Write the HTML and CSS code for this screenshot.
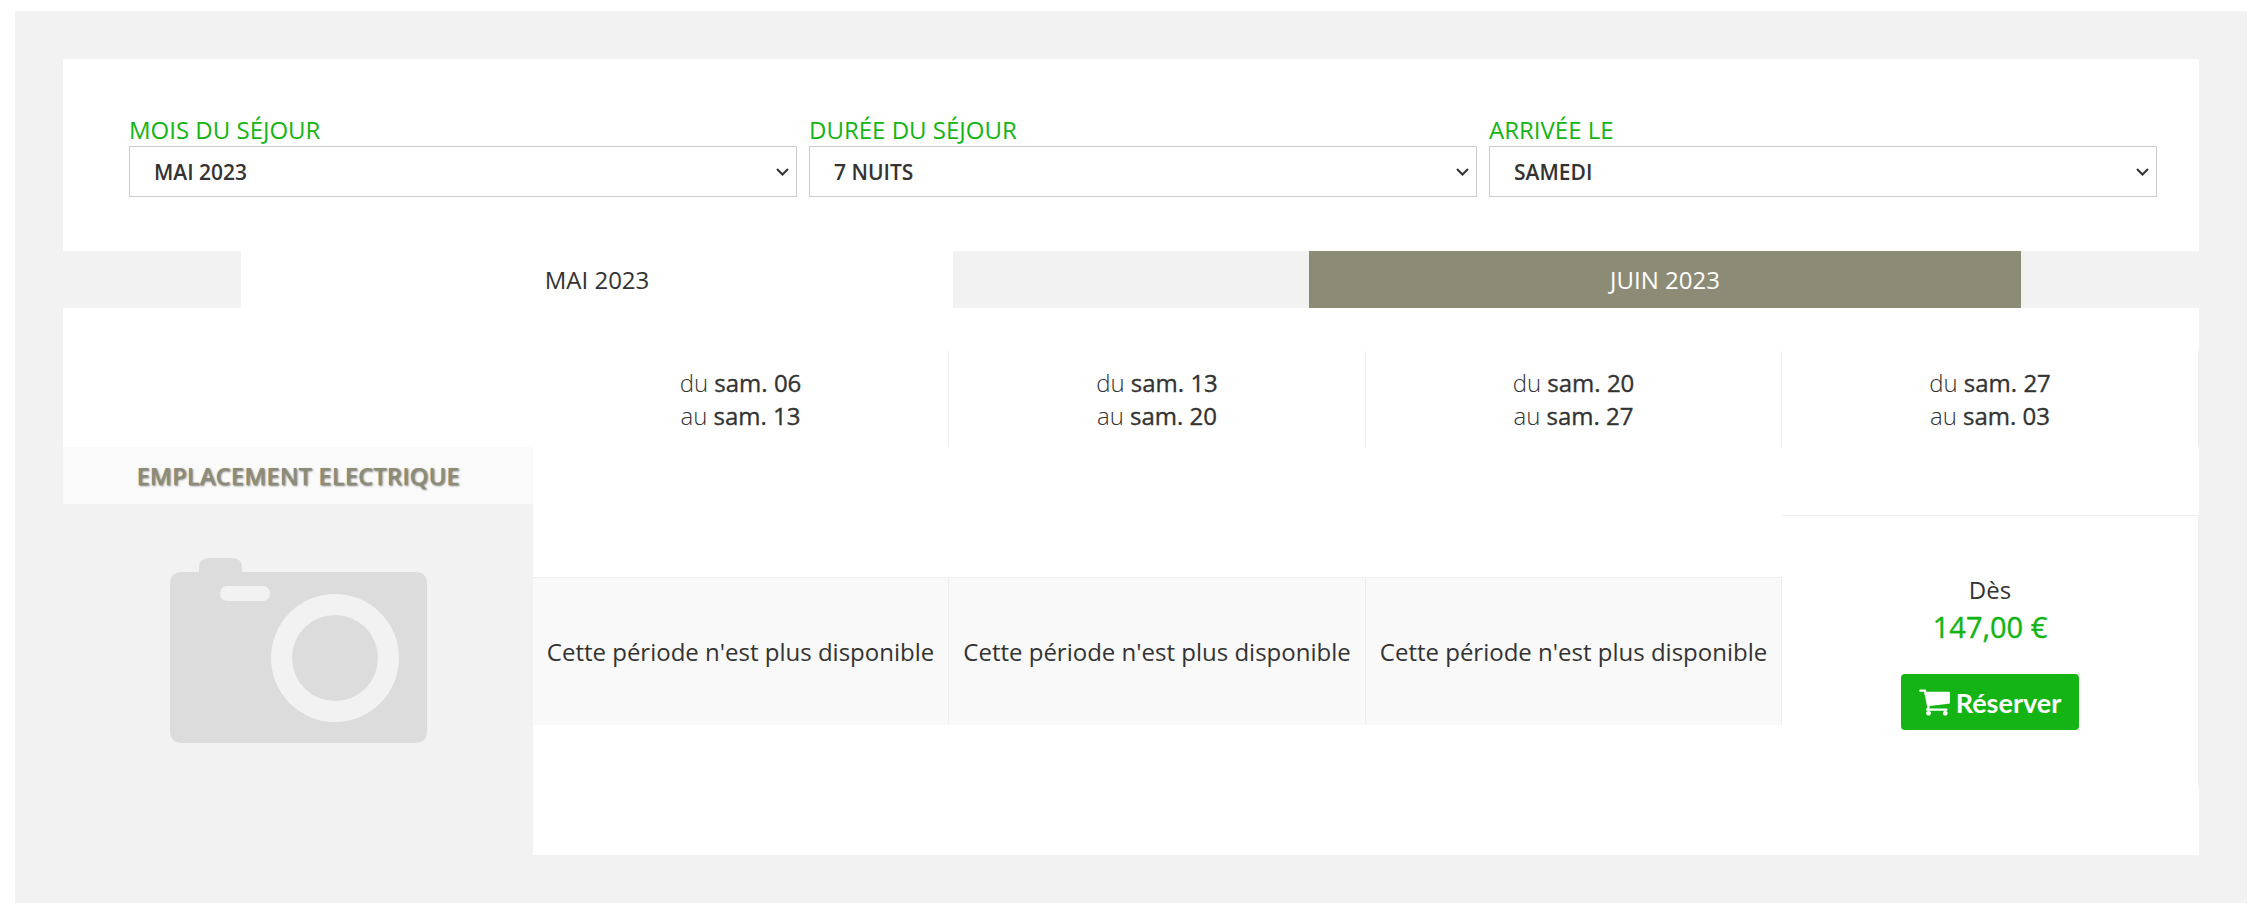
FILE: index.html
```html
<!DOCTYPE html>
<html lang="fr">
<head>
    <meta charset="UTF-8">
    <meta name="viewport" content="width=device-width, initial-scale=1.0">
    <title>Réservation</title>
    <link rel="stylesheet" href="styles.css">
</head>
<body>
    <div class="frame">
        <div class="panel">
            <form class="filters">
                <div class="field">
                    <label for="mois">MOIS DU SÉJOUR</label>
                    <select id="mois"><option>MAI 2023</option><option>JUIN 2023</option></select>
                </div>
                <div class="field">
                    <label for="duree">DURÉE DU SÉJOUR</label>
                    <select id="duree"><option>7 NUITS</option><option>14 NUITS</option></select>
                </div>
                <div class="field">
                    <label for="arrivee">ARRIVÉE LE</label>
                    <select id="arrivee"><option>SAMEDI</option><option>DIMANCHE</option></select>
                </div>
            </form>

            <div class="tabs">
                <div class="tab-gap"></div>
                <div class="tab active">MAI 2023</div>
                <div class="tab-gap"></div>
                <div class="tab">JUIN 2023</div>
                <div class="tab-gap"></div>
            </div>

            <div class="rates">
                <div class="period-spacer"></div>
                <div class="period">du <b>sam. 06</b><br>au <b>sam. 13</b></div>
                <div class="period">du <b>sam. 13</b><br>au <b>sam. 20</b></div>
                <div class="period">du <b>sam. 20</b><br>au <b>sam. 27</b></div>
                <div class="period">du <b>sam. 27</b><br>au <b>sam. 03</b></div>

                <div class="product">
                    <h2 class="product-title">EMPLACEMENT ELECTRIQUE</h2>
                    <div class="product-image">
                        <svg class="camera" viewBox="0 0 257 185" width="257" height="185">
                            <path fill="#dcdcdc" d="M29 14v-4q0-10 10-10h23q10 0 10 10v4h173q12 0 12 12v147q0 12-12 12H12q-12 0-12-12V26q0-12 12-12z"/>
                            <rect fill="#f2f2f2" x="50" y="28" width="50" height="15" rx="7"/>
                            <circle fill="#f2f2f2" cx="165" cy="100" r="64"/>
                            <circle fill="#dcdcdc" cx="165" cy="100" r="43"/>
                        </svg>
                    </div>
                </div>
                <div class="closed">Cette période n'est plus disponible</div>
                <div class="closed">Cette période n'est plus disponible</div>
                <div class="closed">Cette période n'est plus disponible</div>
                <div class="offer">
                    <div class="offer-from">Dès</div>
                    <div class="offer-price">147,00 €</div>
                    <a class="book" href="#">
                        <svg class="cart" viewBox="0 256 1664 1408" width="31" height="27"><path fill="#fff" d="M640 1536q0 52-38 90t-90 38-90-38-38-90 38-90 90-38 90 38 38 90zm896 0q0 52-38 90t-90 38-90-38-38-90 38-90 90-38 90 38 38 90zm128-1088v512q0 24-16.500 42.500t-40.500 21.500l-1044 122q13 60 13 70 0 16-24 64h920q26 0 45 19t19 45-19 45-45 19h-1024q-26 0-45-19t-19-45q0-11 8-31.500t16-36 21.500-40 15.500-29.500l-177-823h-204q-26 0-45-19t-19-45 19-45 45-19h256q16 0 28.500 6.500t19.500 15.500 13 24.500 8 26 5.500 29.500 4.500 26h1201q26 0 45 19t19 45z"/></svg>
                        Réserver
                    </a>
                </div>
            </div>
        </div>
    </div>
</body>
</html>
```

FILE: styles.css
```css
* {
    box-sizing: border-box;
}

body {
    margin: 0;
    padding: 11px 9px 16px 15px;
    background: #fff;
    color: #333;
    font-family: "Open Sans", Arial, sans-serif;
}

.frame {
    padding: 48px;
    background: #f2f2f2;
}

.panel {
    background: #fff;
}

/* filters */
.filters {
    display: flex;
    gap: 12px;
    height: 192px;
    padding: 57px 42px 0 66px;
}

.field {
    flex: 1;
}

.field label {
    display: block;
    height: 30px;
    color: #13b413;
    font-size: 24px;
    line-height: 27px;
}

.field select {
    width: 100%;
    height: 51px;
    padding: 0 0 0 24px;
    border: 1px solid #ccc;
    border-radius: 0;
    appearance: none;
    background: #fff url("data:image/svg+xml,%3Csvg xmlns='http://www.w3.org/2000/svg' width='13' height='8'%3E%3Cpath d='M1 1l5.500 5.500L12 1' fill='none' stroke='%23333' stroke-width='2'/%3E%3C/svg%3E") no-repeat right 7px center;
    color: #333;
    font-family: inherit;
    font-size: 21px;
    font-weight: 600;
}

/* month tabs */
.tabs {
    display: grid;
    grid-template-columns: 178px 712px 356px 712px 178px;
    grid-template-rows: 57px;
    height: 57px;
    background: #f2f2f2;
}

.tab {
    background: #8c8c76;
    color: #fff;
    font-size: 24px;
    line-height: 57px;
    text-align: center;
}

.tab.active {
    background: #fff;
    color: #333;
}

/* rates table */
.rates {
    display: grid;
    grid-template-columns: 470px 416px 417px 416px 417px;
    grid-template-rows: 96px 408px;
    padding-top: 43px;
}

.period {
    padding-top: 15px;
    border-right: 1px solid #eee;
    font-size: 24px;
    font-weight: 300;
    line-height: 33px;
    text-align: center;
}

.period b {
    font-weight: 400;
    -webkit-text-stroke: 0.35px #333;
}

.product-title {
    height: 57px;
    margin: 0;
    background: #fafafa;
    color: #8c8c76;
    font-size: 24px;
    font-weight: 600;
    line-height: 57px;
    text-align: center;
    text-shadow: 1px 1px 2px #777;
}

.product-image {
    height: 351px;
    padding-top: 54px;
    background: #f2f2f2;
}

.camera {
    display: block;
    margin: 0 auto;
}

.closed {
    align-self: center;
    height: 148px;
    border-top: 1px solid #eee;
    border-right: 1px solid #eee;
    background: #f9f9f9;
    font-size: 24px;
    line-height: 148px;
    text-align: center;
    white-space: nowrap;
}

.offer {
    align-self: center;
    height: 272px;
    padding-top: 56px;
    border-top: 1px solid #eee;
    border-right: 1px solid #eee;
    text-align: center;
}

.offer-from {
    font-size: 24px;
    line-height: 35px;
}

.offer-price {
    margin-top: 1px;
    color: #13b413;
    font-size: 29px;
    line-height: 38px;
    -webkit-text-stroke: 0.4px #13b413;
}

.book {
    display: inline-flex;
    align-items: center;
    justify-content: center;
    gap: 6px;
    width: 178px;
    height: 56px;
    margin-top: 28px;
    border-radius: 4px;
    background: #13b413;
    color: #fff;
    font-family: Lato, "Open Sans", sans-serif;
    font-size: 27px;
    font-weight: 700;
    text-decoration: none;
}
```
